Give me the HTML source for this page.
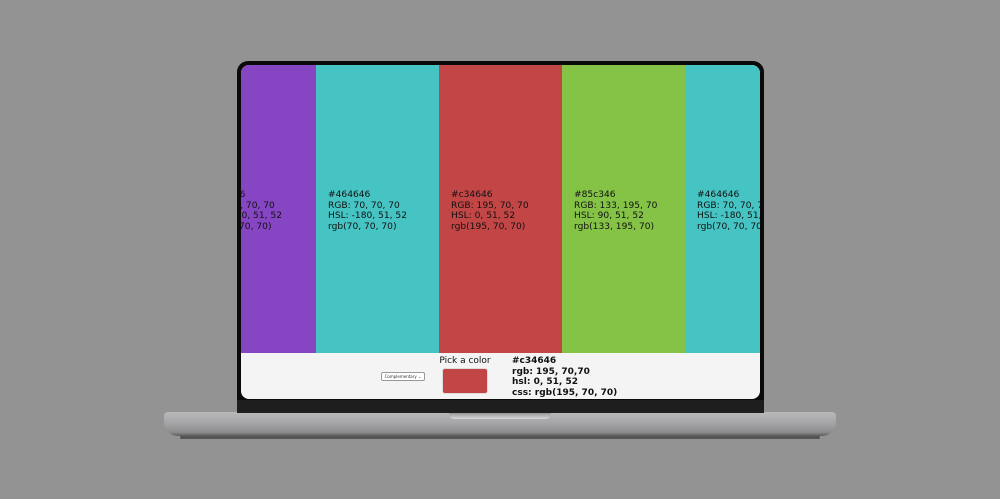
<!DOCTYPE html>
<html><head><style>
body{margin:0;width:1000px;height:499px;background:#939393;position:relative;overflow:hidden;font-family:"DejaVu Sans","Liberation Sans",sans-serif;}
.bezel{position:absolute;left:237px;top:61px;width:527px;height:352px;background:#0a0a0a;border-radius:11px 11px 0 0;}
.bot{position:absolute;left:237px;top:400px;width:527px;height:13px;background:#1e1e1e;}
.screen{position:absolute;left:241px;top:65px;width:519px;height:334px;border-radius:8px;overflow:hidden;background:#f4f4f4;}
.col{position:absolute;top:0;height:288px;}
.t{position:absolute;top:125px;font-size:9.1px;line-height:10.5px;color:#111;white-space:nowrap;}
.base{position:absolute;left:164px;top:412px;width:672px;height:24px;border-radius:4px 4px 14px 14px;background:linear-gradient(#b9b9bb 0,#a8a8aa 40%,#8c8c8e 85%,#5a5a5a 100%);}
.notch{position:absolute;left:449px;top:412px;width:102px;height:7px;background:linear-gradient(#8a8a8a,#d8d8d8);border-radius:0 0 5px 5px;}
.shadow{position:absolute;left:180px;top:436px;width:640px;height:3px;background:#555;border-radius:2px;}
</style></head><body>
<div class="shadow"></div>
<div class="base"></div>
<div class="notch"></div>
<div class="bezel"></div>
<div class="bot"></div>
<div class="screen">
 <div class="col" style="left:0;width:75px;background:#8646c3"><div class="t" style="left:-38px">#464646<br>RGB: 70, 70, 70<br>HSL: -180, 51, 52<br>rgb(70, 70, 70)</div></div>
 <div class="col" style="left:75px;width:123px;background:#46c3c3"><div class="t" style="left:12px">#464646<br>RGB: 70, 70, 70<br>HSL: -180, 51, 52<br>rgb(70, 70, 70)</div></div>
 <div class="col" style="left:198px;width:123px;background:#c34646"><div class="t" style="left:12px">#c34646<br>RGB: 195, 70, 70<br>HSL: 0, 51, 52<br>rgb(195, 70, 70)</div></div>
 <div class="col" style="left:321px;width:123px;background:#85c346"><div class="t" style="left:12px">#85c346<br>RGB: 133, 195, 70<br>HSL: 90, 51, 52<br>rgb(133, 195, 70)</div></div>
 <div class="col" style="left:444px;width:75px;background:#46c3c3;overflow:hidden"><div class="t" style="left:12px">#464646<br>RGB: 70, 70, 70<br>HSL: -180, 51, 52<br>rgb(70, 70, 70)</div></div>
 <div style="position:absolute;left:140px;top:307px;width:42px;height:7px;border:1px solid #999;border-radius:2px;background:#fff;font-size:4px;line-height:7px;color:#333;text-align:center">Complementary ⌄</div>
 <div style="position:absolute;left:189px;top:291px;width:70px;text-align:center;font-size:9px;color:#111">Pick a color</div>
 <div style="position:absolute;left:201px;top:303px;width:46px;height:26px;background:#c34646;border-radius:3px;border:1px solid #ddd;box-sizing:border-box"></div>
 <div style="position:absolute;left:271px;top:291px;font-size:9px;line-height:10.5px;font-weight:bold;color:#111;white-space:nowrap">#c34646<br>rgb: 195, 70,70<br>hsl: 0, 51, 52<br>css: rgb(195, 70, 70)</div>
</div>
</body></html>
